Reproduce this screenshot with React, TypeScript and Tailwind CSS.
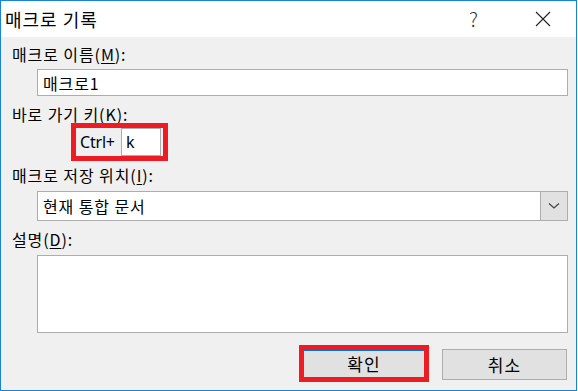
import React from 'react';

const font = { fontFamily: '"Noto Sans CJK KR", "Noto Sans", sans-serif' };

const Label: React.FC<{ text: string; mnemonic: string; className?: string }> = ({ text, mnemonic, className }) => (
  <div className={`h-5 ml-[11px] text-[16px] leading-5 tracking-[0.9px] text-black ${className ?? ''}`}>
    {text}(<span className="underline underline-offset-2">{mnemonic}</span>):
  </div>
);

const App: React.FC = () => {
  return (
    <div className="w-[578px] h-[391px] bg-white" style={font}>
      <div className="w-[577px] h-[391px] border border-[#1883d7] flex flex-col">
        {/* 제목 표시줄 */}
        <div className="h-[36px] bg-white flex items-center shrink-0">
          <span className="ml-[4px] text-[18px] tracking-[1px] text-black">매크로 기록</span>
          <span className="ml-auto mr-[57px] text-[20px] font-light text-[#333]">?</span>
          <svg className="mr-[25px]" width="16" height="16" viewBox="0 0 16 16">
            <path d="M1 1 L15 15 M15 1 L1 15" stroke="#222" strokeWidth="1.1" fill="none" />
          </svg>
        </div>

        {/* 본문 */}
        <div className="flex-1 bg-[#f0f0f0] flex flex-col">
          <Label text="매크로 이름" mnemonic="M" className="mt-[7px]" />
          <div className="mt-[5px] ml-[36px] w-[531px] h-[27px] bg-white border border-[#adadad] flex items-center px-[5px] text-[16px] tracking-[0.9px]">
            매크로1
          </div>

          <Label text="바로 가기 키" mnemonic="K" className="mt-[8px]" />
          <div className="mt-[-1px] ml-[70px] w-[97px] h-[38px] border-[5px] border-[#ed1c24] flex items-center">
            <span className="ml-[4px] text-[16px] tracking-[-0.2px] text-black" style={{ fontFamily: '"Noto Sans", sans-serif' }}>
              Ctrl+
            </span>
            <div className="ml-auto mr-[2px] w-[40px] h-[28px] bg-white border border-[#adadad] flex items-center px-[4px] text-[16px]" style={{ fontFamily: '"Noto Sans", sans-serif' }}>
              k
            </div>
          </div>

          <div className="h-5 ml-[11px] mt-[4px] text-[16px] leading-5 tracking-[0.9px] text-black">
            매크로 저장 위치(<span className="underline underline-offset-2">I</span>):
          </div>
          <div className="mt-[6px] ml-[36px] w-[531px] h-[30px] bg-white border border-[#adadad] flex">
            <div className="flex-1 flex items-center px-[5px] text-[16px] tracking-[0.9px]">현재 통합 문서</div>
            <div className="w-[27px] bg-[#e1e1e1] border-l border-[#adadad] flex items-center justify-center">
              <svg width="12" height="8" viewBox="0 0 12 8">
                <path d="M1 1.5 L6 6 L11 1.5" stroke="#444" strokeWidth="1.2" fill="none" />
              </svg>
            </div>
          </div>

          <Label text="설명" mnemonic="D" className="mt-[8px]" />
          <div className="mt-[6px] ml-[36px] w-[531px] h-[78px] bg-white border border-[#adadad]" />

          <div className="mt-[12px] flex items-start">
            <div className="ml-[298px] w-[130px] h-[37px] border-[5px] border-[#ed1c24] flex">
              <div className="flex-1 bg-[#e1e1e1] border-t border-[#0078d7] flex items-center justify-center text-[17px] tracking-[1px]">
                확인
              </div>
            </div>
            <div className="ml-[13px] mt-[4px] w-[125px] h-[31px] bg-[#e1e1e1] border border-[#adadad] flex items-center justify-center text-[17px] tracking-[1px]">
              취소
            </div>
          </div>
        </div>
      </div>
    </div>
  );
};

export default App;
